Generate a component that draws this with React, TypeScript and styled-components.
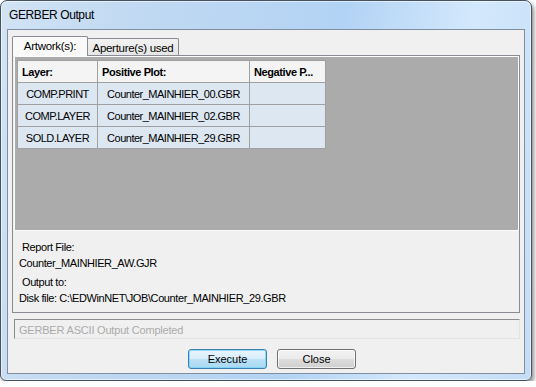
import { Fragment } from 'react';
import { createGlobalStyle, styled } from 'styled-components';

const ROWS = [
  { layer: 'COMP.PRINT', positive: 'Counter_MAINHIER_00.GBR', negative: '' },
  { layer: 'COMP.LAYER', positive: 'Counter_MAINHIER_02.GBR', negative: '' },
  { layer: 'SOLD.LAYER', positive: 'Counter_MAINHIER_29.GBR', negative: '' },
];

const GlobalStyle = createGlobalStyle`
  html, body {
    margin: 0;
    padding: 0;
    background: #ffffff;
  }
  body {
    font-family: 'Liberation Sans', Arial, sans-serif;
    font-size: 11px;
    color: #000;
  }
`;

const App = () => {
  return (
    <>
      <GlobalStyle />
      <Window>
        <TitleBar>GERBER Output</TitleBar>
        <Client>
          <TabStrip>
            <Tab $active>Artwork(s):</Tab>
            <Tab>Aperture(s) used</Tab>
          </TabStrip>
          <TabPage>
            <GridArea>
              <Grid>
                <HeadCell>Layer:</HeadCell>
                <HeadCell>Positive Plot:</HeadCell>
                <HeadCell>Negative P...</HeadCell>
                {ROWS.map((row) => (
                  <Fragment key={row.layer}>
                    <Cell>{row.layer}</Cell>
                    <Cell>{row.positive}</Cell>
                    <Cell>{row.negative}</Cell>
                  </Fragment>
                ))}
              </Grid>
            </GridArea>
            <Info>
              <InfoLine $label>Report File:</InfoLine>
              <InfoLine>Counter_MAINHIER_AW.GJR</InfoLine>
              <InfoLine $label $gap>Output to:</InfoLine>
              <InfoLine>Disk file: C:\EDWinNET\JOB\Counter_MAINHIER_29.GBR</InfoLine>
            </Info>
          </TabPage>
          <StatusBox>GERBER ASCII Output Completed</StatusBox>
          <ButtonRow>
            <Button type="button" $default>Execute</Button>
            <Button type="button">Close</Button>
          </ButtonRow>
        </Client>
      </Window>
    </>
  );
};

const Window = styled.div`
  box-sizing: border-box;
  width: 532px;
  height: 381px;
  display: flex;
  flex-direction: column;
  padding: 0 6px 6px 6px;
  border: 1px solid #46525f;
  border-radius: 7px 7px 6px 6px;
  background: linear-gradient(
    100deg,
    #d2e3f4 0%,
    #c2daf2 20%,
    #b8d5f3 45%,
    #b2d3f5 58%,
    #d3e8fc 80%,
    #c4ddf5 100%
  );
  box-shadow:
    inset 0 0 0 1px rgba(255, 255, 255, 0.55),
    2px 3px 4px rgba(0, 0, 0, 0.45);
`;

const TitleBar = styled.div`
  height: 28px;
  display: flex;
  align-items: center;
  padding-left: 2px;
  font-size: 12px;
  letter-spacing: -0.4px;
  color: #000;
`;

const Client = styled.div`
  flex: 1;
  display: flex;
  flex-direction: column;
  background: #f0f0f0;
  border: 1px solid #7f8ea0;
`;

const TabStrip = styled.div`
  display: flex;
  align-items: flex-end;
  height: 19px;
  margin: 6px 4px 0 4px;
`;

const Tab = styled.div<{ $active?: boolean }>`
  box-sizing: border-box;
  position: relative;
  display: flex;
  align-items: center;
  justify-content: center;
  border: 1px solid #898c95;
  border-bottom: none;
  border-radius: 2px 2px 0 0;
  font-size: 11.5px;
  letter-spacing: -0.3px;
  ${({ $active }) =>
    $active
      ? `
    z-index: 1;
    width: 76px;
    height: 20px;
    margin-bottom: -1px;
    background: #f9f9f9;
    padding-bottom: 2px;
  `
      : `
    width: 92px;
    height: 17px;
    margin-left: -1px;
    background: linear-gradient(#f2f2f2, #e6e6e6);
    padding-top: 1px;
  `}
`;

const TabPage = styled.div`
  box-sizing: border-box;
  height: 258px;
  margin: 0 4px;
  border: 1px solid #898c95;
  background: #f0f0f0;
  display: flex;
  flex-direction: column;
`;

const GridArea = styled.div`
  box-sizing: border-box;
  height: 175px;
  margin-left: 1px;
  padding: 3px 0 0 2px;
  border: 1px solid #fcfcfc;
  background: #ababab;
`;

const Grid = styled.div`
  display: grid;
  grid-template-columns: 80px 152px 76px;
  grid-auto-rows: 22px;
  width: max-content;
  border-top: 1px solid #a0a0a0;
  border-left: 1px solid #a0a0a0;
`;

const HeadCell = styled.div`
  box-sizing: border-box;
  display: flex;
  align-items: center;
  padding: 1px 0 0 4px;
  background: #f4f4f4;
  border-right: 1px solid #a0a0a0;
  border-bottom: 1px solid #a0a0a0;
  font-weight: bold;
  letter-spacing: -0.4px;
  white-space: nowrap;
  overflow: hidden;
`;

const Cell = styled.div`
  box-sizing: border-box;
  display: flex;
  align-items: center;
  justify-content: center;
  padding-top: 1px;
  background: #dde7f1;
  border-right: 1px solid #a0a0a0;
  border-bottom: 1px solid #a0a0a0;
  letter-spacing: -0.5px;
  white-space: nowrap;
`;

const Info = styled.div`
  display: flex;
  flex-direction: column;
  padding: 8px 0 6px 5px;
`;

const InfoLine = styled.div<{ $label?: boolean; $gap?: boolean }>`
  height: 16px;
  line-height: 16px;
  letter-spacing: -0.4px;
  white-space: nowrap;
  padding-left: ${({ $label }) => ($label ? '4px' : '1px')};
  margin-top: ${({ $gap }) => ($gap ? '3px' : '0')};
`;

const StatusBox = styled.div`
  box-sizing: border-box;
  height: 20px;
  margin: 6px 4px 0 6px;
  padding: 1px 0 0 4px;
  display: flex;
  align-items: center;
  border: 1px solid;
  border-color: #8c8c8c #e3e3e3 #e3e3e3 #8c8c8c;
  background: #f0f0f0;
  color: #ababab;
  letter-spacing: -0.2px;
`;

const ButtonRow = styled.div`
  display: flex;
  justify-content: center;
  gap: 10px;
  margin-top: 10px;
  padding-left: 12px;
`;

const Button = styled.button<{ $default?: boolean }>`
  box-sizing: border-box;
  width: 79px;
  height: 20px;
  padding: 0;
  border-radius: 3px;
  font-family: 'Liberation Sans', Arial, sans-serif;
  font-size: 11px;
  color: #000;
  border: 1px solid ${({ $default }) => ($default ? '#3c7fb1' : '#707070')};
  background: ${({ $default }) =>
    $default
      ? 'linear-gradient(#e9f5fc 0%, #d8eefb 50%, #bde2f7 51%, #a9d8f2 100%)'
      : 'linear-gradient(#f2f2f2 0%, #ebebeb 50%, #dddddd 51%, #cfcfcf 100%)'};
  box-shadow: inset 0 0 0 1px ${({ $default }) => ($default ? 'rgba(120, 210, 250, 0.8)' : 'rgba(255, 255, 255, 0.7)')};
`;

export default App;
